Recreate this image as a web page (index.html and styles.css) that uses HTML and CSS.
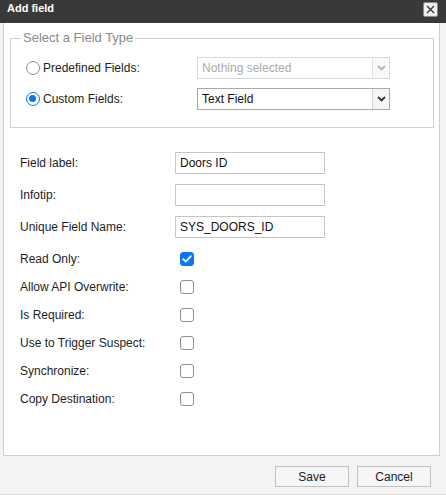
FILE: index.html
```html
<!DOCTYPE html>
<html lang="en">
<head>
<meta charset="utf-8">
<title>Add field</title>
<link rel="stylesheet" href="styles.css">
</head>
<body>
<div class="dialog">
  <div class="titlebar">
    <span class="title">Add field</span>
    <button class="close" type="button" aria-label="Close">
      <svg width="9" height="9" viewBox="0 0 9 9"><path d="M1 1 L8 8 M8 1 L1 8" stroke="#3a3a3a" stroke-width="1.4" fill="none"/></svg>
    </button>
  </div>
  <div class="panel">
    <fieldset class="type-box">
      <legend>Select a Field Type</legend>
      <div class="type-row">
        <label class="radio-label"><span class="radio"></span>Predefined Fields:</label>
        <div class="select disabled">
          <span class="select-text">Nothing selected</span>
          <span class="select-arrow"><svg width="9" height="6" viewBox="0 0 9 6"><path d="M1 1 L4.5 4.5 L8 1" stroke="#b5b5b5" stroke-width="1.8" fill="none"/></svg></span>
        </div>
      </div>
      <div class="type-row">
        <label class="radio-label"><span class="radio checked"></span>Custom Fields:</label>
        <div class="select">
          <span class="select-text">Text Field</span>
          <span class="select-arrow"><svg width="9" height="6" viewBox="0 0 9 6"><path d="M1 1 L4.5 4.5 L8 1" stroke="#333" stroke-width="1.8" fill="none"/></svg></span>
        </div>
      </div>
    </fieldset>
    <div class="fields">
      <div class="row text-row"><span class="label">Field label:</span><span class="input">Doors ID</span></div>
      <div class="row text-row"><span class="label">Infotip:</span><span class="input"></span></div>
      <div class="row text-row"><span class="label">Unique Field Name:</span><span class="input">SYS_DOORS_ID</span></div>
      <div class="row check-row"><span class="label">Read Only:</span><span class="checkbox checked"><svg width="10" height="8" viewBox="0 0 10 8"><path d="M1.3 4.2 L3.8 6.6 L8.7 1.3" stroke="#fff" stroke-width="1.9" fill="none" stroke-linecap="round" stroke-linejoin="round"/></svg></span></div>
      <div class="row check-row"><span class="label">Allow API Overwrite:</span><span class="checkbox"></span></div>
      <div class="row check-row"><span class="label">Is Required:</span><span class="checkbox"></span></div>
      <div class="row check-row"><span class="label">Use to Trigger Suspect:</span><span class="checkbox"></span></div>
      <div class="row check-row"><span class="label">Synchronize:</span><span class="checkbox"></span></div>
      <div class="row check-row"><span class="label">Copy Destination:</span><span class="checkbox"></span></div>
    </div>
  </div>
  <div class="footer">
    <button class="btn" type="button">Save</button>
    <button class="btn" type="button">Cancel</button>
  </div>
</div>
</body>
</html>
```

FILE: styles.css
```css
* { box-sizing: border-box; }
html, body { margin: 0; padding: 0; }
body {
  background: #f3f3f3;
  font-family: "Liberation Sans", Arial, sans-serif;
  font-size: 12px;
  color: #1e1e1e;
}
.dialog {
  width: 446px;
  height: 495px;
  border-bottom: 1px solid #dcdcdc;
  display: flex;
  flex-direction: column;
}
.titlebar {
  height: 23px;
  background: #393939;
  display: flex;
  justify-content: space-between;
  align-items: flex-start;
  padding: 2px 8px 0 7px;
}
.title {
  color: #fff;
  font-weight: bold;
  font-size: 11px;
  line-height: 13px;
}
.close {
  width: 15px;
  height: 15px;
  margin: 0;
  padding: 0;
  background: #efefef;
  border: 1px solid #8a8a8a;
  border-radius: 2px;
  display: flex;
  align-items: center;
  justify-content: center;
}
.panel {
  height: 433px;
  margin-left: 3px;
  width: 437px;
  background: #fff;
  border: 1px solid #cfcfcf;
  border-top: none;
}
.type-box {
  margin: 7px 5px 0 6px;
  padding: 11px 10px 17px 15px;
  border: 1px solid #d2d2d2;
  min-width: 0;
}
.type-box legend {
  font-size: 13px;
  line-height: 16px;
  color: #8a8a8a;
  padding: 0 2px;
  margin-left: -5px;
}
.type-row {
  display: flex;
  align-items: center;
  height: 22px;
}
.type-row + .type-row { margin-top: 9px; }
.radio-label {
  width: 171px;
  display: flex;
  align-items: center;
}
.radio {
  width: 14px;
  height: 14px;
  border: 1px solid #8e8e8e;
  border-radius: 50%;
  margin-right: 3px;
  background: #fff;
  position: relative;
  flex: none;
}
.radio.checked {
  border: 1.5px solid #0b76f5;
}
.radio.checked::after {
  content: "";
  position: absolute;
  left: 2px;
  top: 2px;
  width: 7px;
  height: 7px;
  border-radius: 50%;
  background: #0b76f5;
}
.select {
  width: 193px;
  height: 22px;
  border: 1px solid #a9a9a9;
  display: flex;
  background: #fff;
}
.select.disabled { border-color: #d9d9d9; }
.select-text {
  flex: 1;
  padding-left: 4px;
  line-height: 20px;
  color: #111;
}
.select.disabled .select-text { color: #ababab; }
.select-arrow {
  width: 17px;
  border-left: 1px solid #d4d4d4;
  background: #f5f5f5;
  display: flex;
  align-items: center;
  justify-content: center;
}
.select.disabled .select-arrow { border-left-color: #e4e4e4; background: #f8f8f8; }
.fields {
  padding: 24px 0 0 16px;
}
.row {
  display: flex;
  align-items: center;
  height: 22px;
}
.text-row { margin-bottom: 10px; }
.check-row { margin-bottom: 6px; }
.label {
  width: 155px;
  flex: none;
}
.input {
  width: 150px;
  height: 22px;
  border: 1px solid #c6c6c6;
  padding: 0 4px;
  line-height: 20px;
  color: #111;
}
.checkbox {
  width: 14px;
  height: 14px;
  margin-left: 5px;
  border: 1px solid #8f8f8f;
  border-radius: 3px;
  background: #fff;
  display: flex;
  align-items: center;
  justify-content: center;
}
.checkbox.checked {
  background: #0b76f5;
  border-color: #0b76f5;
}
.footer {
  flex: 1;
  display: flex;
  justify-content: flex-end;
  align-items: flex-start;
  gap: 8px;
  padding: 10px 15px 0 0;
}
.btn {
  width: 74px;
  height: 21px;
  margin: 0;
  padding: 0;
  background: #f6f6f6;
  border: 1px solid #c2c2c2;
  border-radius: 0;
  font-family: "Liberation Sans", Arial, sans-serif;
  font-size: 12px;
  color: #222;
}
```
